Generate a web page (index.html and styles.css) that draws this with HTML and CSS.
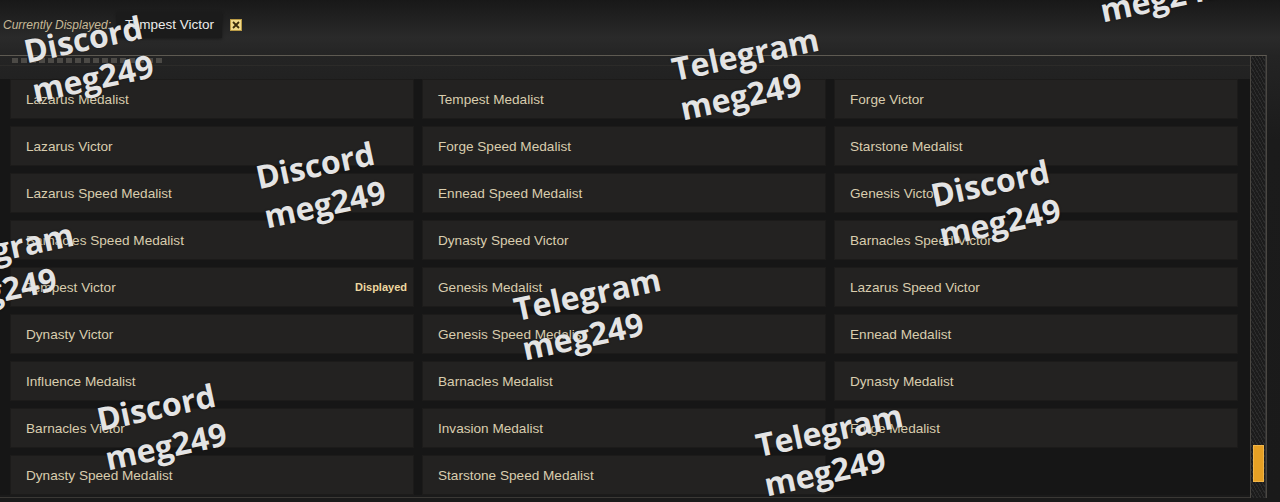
FILE: index.html
```html
<!DOCTYPE html>
<html lang="en">
<head>
  <meta charset="UTF-8">
  <title>Titles</title>
  <link rel="stylesheet" href="styles.css">
</head>
<body>
  <div class="topbar">
    <span class="current-label">Currently Displayed:</span>
    <span class="current-tag">Tempest Victor</span>
    <span class="clear-btn">
      <svg width="8" height="8" viewBox="0 0 8 8"><path d="M1 1L7 7M7 1L1 7" stroke="#3a2c0c" stroke-width="1.8"/></svg>
    </span>
  </div>

  <div class="panel">
    <div class="panel-main">
      <div class="panel-head"><span class="head-dash"></span></div>
      <div class="title-grid">
        <div class="cell">Lazarus Medalist</div>
        <div class="cell">Tempest Medalist</div>
        <div class="cell">Forge Victor</div>
        <div class="cell">Lazarus Victor</div>
        <div class="cell">Forge Speed Medalist</div>
        <div class="cell">Starstone Medalist</div>
        <div class="cell">Lazarus Speed Medalist</div>
        <div class="cell">Ennead Speed Medalist</div>
        <div class="cell">Genesis Victor</div>
        <div class="cell">Barnacles Speed Medalist</div>
        <div class="cell">Dynasty Speed Victor</div>
        <div class="cell">Barnacles Speed Victor</div>
        <div class="cell">Tempest Victor <span class="badge">Displayed</span></div>
        <div class="cell">Genesis Medalist</div>
        <div class="cell">Lazarus Speed Victor</div>
        <div class="cell">Dynasty Victor</div>
        <div class="cell">Genesis Speed Medalist</div>
        <div class="cell">Ennead Medalist</div>
        <div class="cell">Influence Medalist</div>
        <div class="cell">Barnacles Medalist</div>
        <div class="cell">Dynasty Medalist</div>
        <div class="cell">Barnacles Victor</div>
        <div class="cell">Invasion Medalist</div>
        <div class="cell">Forge Medalist</div>
        <div class="cell">Dynasty Speed Medalist</div>
        <div class="cell">Starstone Speed Medalist</div>
      </div>
    </div>
    <div class="scroll">
      <div class="scroll-thumb"></div>
    </div>
  </div>

  <!-- watermark overlay -->
  <div class="watermarks">
    <div class="wm" style="left:20px;top:32px">Discord<br>meg249</div>
    <div class="wm" style="left:668px;top:50px">Telegram<br>meg249</div>
    <div class="wm" style="left:1088px;top:-48px">Discord<br>meg249</div>
    <div class="wm" style="left:252px;top:158px">Discord<br>meg249</div>
    <div class="wm" style="left:-77px;top:245px">Telegram<br>meg249</div>
    <div class="wm" style="left:927px;top:176px">Discord<br>meg249</div>
    <div class="wm" style="left:510px;top:290px">Telegram<br>meg249</div>
    <div class="wm" style="left:93px;top:400px">Discord<br>meg249</div>
    <div class="wm" style="left:752px;top:426px">Telegram<br>meg249</div>
  </div>
</body>
</html>
```

FILE: styles.css
```css
* { margin: 0; padding: 0; box-sizing: border-box; }
html, body { height: 100%; }
body {
  font-family: 'Liberation Sans', Arial, sans-serif;
  background: linear-gradient(180deg, #181818 0, #2a2a2a 38px, #242424 56px, #1b1b1b 140px, #1a1a1a 100%);
  color: #d8ccae;
  position: relative;
  overflow: hidden;
}

/* bar with the current title */
.topbar {
  height: 55px;
  display: flex;
  align-items: center;
  padding: 0 0 5px 3px;
}
.current-label {
  font-size: 12px;
  font-style: italic;
  color: #c7ba98;
  margin-right: 6px;
}
.current-tag {
  background: #1b1b1b;
  color: #ececec;
  font-size: 13.5px;
  height: 26px;
  line-height: 26px;
  padding: 0 8px 0 8px;
  box-shadow: 0 1px 3px rgba(0,0,0,0.4);
}
.clear-btn {
  width: 12px;
  height: 12px;
  margin-left: 8px;
  background: #f1da8a;
  border: 1px solid #b99a45;
  display: flex;
  align-items: center;
  justify-content: center;
}

/* list panel */
.panel {
  width: 1267px;
  display: flex;
  border-top: 1px solid #5e5a52;
  border-right: 1px solid #4a4742;
}
.panel-main {
  width: 1250px;
  border-bottom: 1px solid #3a3835;
  padding-bottom: 2px;
}
.panel-head {
  height: 23px;
  padding: 1px 0 0 12px;
}
.head-dash {
  display: block;
  width: 152px;
  height: 5px;
  margin-top: 1px;
  background: repeating-linear-gradient(90deg, #5d5a55 0 6px, transparent 6px 9px);
  opacity: 0.7;
  border-bottom: 1px solid transparent;
}
.panel-head::after {
  content: "";
  display: block;
  margin: 2px 0 0 -12px;
  border-top: 1px solid #2c2b29;
}
.title-grid {
  display: grid;
  grid-template-columns: repeat(3, 404px);
  grid-auto-rows: 40px;
  gap: 7px 8px;
  padding-left: 10px;
  background: #161616;
}
.cell {
  background: #232221;
  border: 1px solid #1c1b1a;
  font-size: 13.6px;
  color: #d9cdae;
  padding: 0 6px 0 15px;
  display: flex;
  align-items: center;
  justify-content: space-between;
}
.badge {
  font-size: 11px;
  font-weight: bold;
  color: #eed8a0;
}

/* scroll bar */
.scroll {
  width: 16px;
  border-left: 1px solid #4a4742;
  border-right: 1px solid #333;
  background: repeating-linear-gradient(60deg, #1c1c1c 0 2px, #2c2c2c 2px 3px);
  padding: 389px 1px 0 2px;
}
.scroll-thumb {
  height: 37px;
  background: #e6a024;
  border: 1px solid #f0b54a;
}

/* watermarks */
.watermarks {
  position: absolute;
  inset: 0;
  pointer-events: none;
  overflow: hidden;
}
.wm {
  position: absolute;
  font-family: 'Open Sans', sans-serif;
  font-weight: 700;
  font-size: 32px;
  line-height: 40px;
  color: #e4e4e4;
  text-shadow: 0 0 2px rgba(0,0,0,0.5);
  white-space: nowrap;
  transform-origin: 0 0;
  transform: rotate(-12deg);
}
```
